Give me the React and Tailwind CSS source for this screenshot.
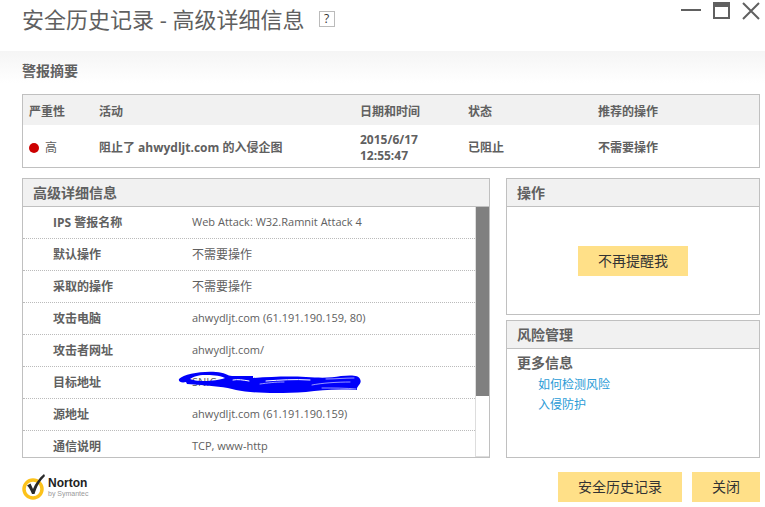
import React from "react";

const font = "font-['Open_Sans','Noto_Sans_CJK_SC',sans-serif]";

const details = [
    { label: "IPS 警报名称", value: "Web Attack: W32.Ramnit Attack 4", latin: true },
    { label: "默认操作", value: "不需要操作" },
    { label: "采取的操作", value: "不需要操作" },
    { label: "攻击电脑", value: "ahwydljt.com (61.191.190.159, 80)", latin: true },
    { label: "攻击者网址", value: "ahwydljt.com/", latin: true },
    { label: "目标地址", value: "SNIC", latin: true, hidden: true },
    { label: "源地址", value: "ahwydljt.com (61.191.190.159)", latin: true },
    { label: "通信说明", value: "TCP, www-http", latin: true },
];

const Scribble = () => (
    <svg
        className="absolute -left-4 top-1 h-6 w-[190px]"
        viewBox="0 0 190 24"
        fill="none"
        aria-hidden="true"
    >
        <path
            fill="#0000fa"
            fillRule="evenodd"
            d="M3 8C8 3 25 0 40 1c8 0 12 4 16 4h21v2c18-1 33-2 53-1 15 1 25 1 35-1 10-1 18-1 19 3 2 4-1 5-3 9v2c-21-1-36 0-51 2-30 2-55 1-70-2-10-3-25-4-35-5l-14-1-1-2C6 12 2 11 3 8zM14 8c2 1 8 2 14 2 8 0 16-1 21-3-6-3-14-3-20-3-7 0-12 2-15 4z"
        />
        <g stroke="#fff" strokeLinecap="round">
            <path d="M57 9c5-1 10 0 16 1M90 10c14-1 28-2 44-1" />
            <path strokeWidth="0.600" d="M84 13c8-1 14-2 24-2M136 14c10-2 25-3 38-3M146 17c12 0 24 0 34 1M150 8c10 0 18-1 28-1" />
        </g>
    </svg>
);

const Logo = () => (
    <div className="flex items-center gap-[2px]">
        <svg className="h-7 w-6" viewBox="0 0 24 28" aria-hidden="true">
            <circle cx="11" cy="16" r="9" fill="none" stroke="#fcc21b" strokeWidth="3.500" />
            <path d="M5 12.500l3.500-2 2.500 5.500C13 11 17 5 22 1l1 2C18 8 15 13 12.500 21H10C8.500 17 7 14.500 5 12.500z" fill="#2a2a2a" />
        </svg>
        <div className="font-['Liberation_Sans',sans-serif]">
            <p className="text-xs leading-3 font-bold text-[#222]">Norton</p>
            <p className="text-[7px] leading-[9px] text-[#999]">by Symantec</p>
        </div>
    </div>
);

const Panel = ({ title, className = "", children }) => (
    <section className={`flex flex-col border border-[#c0c0c0] ${className}`}>
        <h2 className="h-7 border-b border-[#c0c0c0] bg-[#f1f1f1] px-[10px] text-sm leading-7 font-bold">
            {title}
        </h2>
        {children}
    </section>
);

const YellowButton = ({ children }) => (
    <button className="h-[30px] bg-[#ffe088] px-5 text-sm text-[#333]">{children}</button>
);

const App = () => {
    return (
        <div className={`${font} bg-white text-xs text-[#606060]`}>

            {/* Title bar */}
            <header className="flex h-[51px] items-start justify-between pr-[5px] pl-[22px]">
                <div className="flex items-center gap-[14px]">
                    <h1 className="text-[22px] leading-[38px]">安全历史记录 - 高级详细信息</h1>
                    <button className="h-4 w-4 border border-[#bbb] text-xs leading-3 text-[#333]" aria-label="帮助">
                        ?
                    </button>
                </div>

                <div className="flex gap-3 pt-[2px] text-[#606060]">
                    <button aria-label="最小化">
                        <svg width="20" height="18" viewBox="0 0 20 18">
                            <path d="M0 8h20" stroke="currentColor" strokeWidth="2" />
                        </svg>
                    </button>
                    <button aria-label="最大化">
                        <svg width="17" height="18" viewBox="0 0 17 18">
                            <path d="M0 0h17v17H0zM2 5v10h13V5z" fill="currentColor" fillRule="evenodd" />
                        </svg>
                    </button>
                    <button aria-label="关闭窗口">
                        <svg width="18" height="18" viewBox="0 0 18 18">
                            <path d="M1 1l16 16M17 1L1 17" stroke="currentColor" strokeWidth="2" />
                        </svg>
                    </button>
                </div>
            </header>

            <main className="bg-linear-to-b from-[#f5f5f5] to-white to-[32px] pr-[5px] pl-[22px]">
                <h2 className="pt-[10px] pb-[13px] text-sm font-bold">警报摘要</h2>

                {/* Summary */}
                <div className="border border-[#c0c0c0] bg-white">
                    <table className="w-full table-fixed text-left font-bold">
                        <thead>
                            <tr className="h-[30px] bg-[#f1f1f1]">
                                <th className="w-[70px] pt-[3px] pl-[6px]">严重性</th>
                                <th className="pt-[3px] pl-[6px]">活动</th>
                                <th className="w-[108px] pt-[3px] pl-[6px]">日期和时间</th>
                                <th className="w-[130px] pt-[3px] pl-[6px]">状态</th>
                                <th className="w-[167px] pt-[3px] pl-[6px]">推荐的操作</th>
                            </tr>
                        </thead>
                        <tbody>
                            <tr className="h-[42px]">
                                <td className="pt-[3px] pl-[6px] font-normal">
                                    <span className="flex items-center gap-[6px]">
                                        <span className="h-[10px] w-[10px] rounded-full bg-[#cc0000]" />
                                        高
                                    </span>
                                </td>
                                <td className="pt-[3px] pl-[6px]">阻止了 ahwydljt.com 的入侵企图</td>
                                <td className="pt-[3px] pl-[6px]">
                                    2015/6/17
                                    <br />
                                    12:55:47
                                </td>
                                <td className="pt-[3px] pl-[6px]">已阻止</td>
                                <td className="pt-[3px] pl-[6px]">不需要操作</td>
                            </tr>
                        </tbody>
                    </table>
                </div>

                <div className="mt-[10px] flex gap-4">

                    {/* Details */}
                    <Panel title="高级详细信息" className="flex-1">
                        <div className="flex h-[250px]">
                            <dl className="flex-1 overflow-hidden">
                                {details.map((row) => (
                                    <div
                                        key={row.label}
                                        className="flex h-8 items-center border-b border-dotted border-[#bbb] pl-[30px]"
                                    >
                                        <dt className="w-[139px] font-bold">{row.label}</dt>
                                        <dd
                                            className={`${row.latin ? "text-[11px]" : ""} ${
                                                row.hidden ? "relative flex h-full items-center" : ""
                                            }`}
                                        >
                                            {row.value}
                                            {row.hidden && <Scribble />}
                                        </dd>
                                    </div>
                                ))}
                            </dl>
                            <div className="w-[14px] border-b border-l border-[#ddd]">
                                <div className="h-[76%] bg-[#808080]" />
                            </div>
                        </div>
                    </Panel>

                    <div className="flex w-[254px] flex-col gap-[5px]">
                        <Panel title="操作" className="h-[137px]">
                            <div className="flex flex-1 items-center justify-center">
                                <YellowButton>不再提醒我</YellowButton>
                            </div>
                        </Panel>

                        <Panel title="风险管理" className="flex-1">
                            <div className="px-[10px] pt-1">
                                <h3 className="text-sm leading-5 font-bold">更多信息</h3>
                                <ul className="pt-[2px] pl-[21px] leading-5 text-[#2a9bd6]">
                                    <li>
                                        <a href="#detect">如何检测风险</a>
                                    </li>
                                    <li>
                                        <a href="#protect">入侵防护</a>
                                    </li>
                                </ul>
                            </div>
                        </Panel>
                    </div>
                </div>

                {/* Footer */}
                <footer className="flex items-center justify-between pt-[14px] pb-1">
                    <Logo />
                    <div className="flex gap-[10px]">
                        <YellowButton>安全历史记录</YellowButton>
                        <YellowButton>关闭</YellowButton>
                    </div>
                </footer>
            </main>
        </div>
    );
};

export default App;
